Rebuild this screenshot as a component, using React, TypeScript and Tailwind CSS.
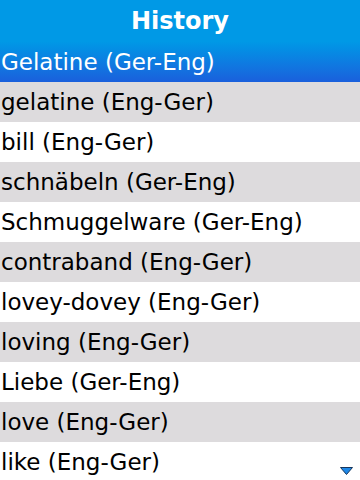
const items = [
  'gelatine (Eng-Ger)',
  'bill (Eng-Ger)',
  'schnäbeln (Ger-Eng)',
  'Schmuggelware (Ger-Eng)',
  'contraband (Eng-Ger)',
  'lovey-dovey (Eng-Ger)',
  'loving (Eng-Ger)',
  'Liebe (Ger-Eng)',
  'love (Eng-Ger)',
  'like (Eng-Ger)',
];

export default function App() {
  return (
    <div className="relative w-[360px] h-[480px] overflow-hidden bg-white font-['DejaVu_Sans',sans-serif]">
      {/* Title */}
      <div className="h-[42px] flex items-center justify-center bg-[#0099e6] text-white text-[24px] font-bold">
        History
      </div>

      {/* Selected */}
      <div className="h-[40px] flex items-center pl-[1px] text-white text-[23px] bg-gradient-to-b from-[#0098e6] to-[#1a5fdc]">
        Gelatine (Ger-Eng)
      </div>

      {items.map((item, i) => (
        <div
          key={item}
          className={`h-[40px] flex items-center pl-[1px] text-[23px] text-black ${i % 2 === 0 ? 'bg-[#dddbdd]' : 'bg-white'}`}
        >
          {item}
        </div>
      ))}

      {/* Scroll arrow */}
      <svg className="absolute left-[340px] top-[467px]" width="13" height="8" viewBox="0 0 13 8">
        <path d="M0.5 0.5 H12.5 L6.5 7.5 Z" fill="#1e88e8" stroke="#17365c" strokeWidth="1" />
      </svg>
    </div>
  );
}
